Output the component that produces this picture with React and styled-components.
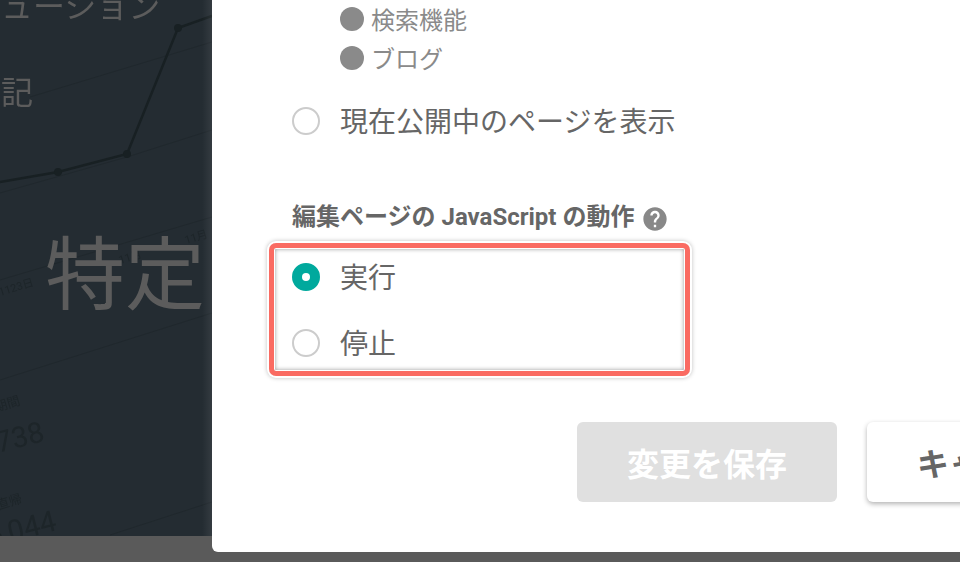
import React from "react"
import styled, { createGlobalStyle } from "styled-components"
import { MdHelp } from "react-icons/md"

const GlobalStyle = createGlobalStyle`
  html, body {
    margin: 0;
    padding: 0;
    background: #5a5a5a;
  }
  body {
    font-family: Roboto, "Noto Sans CJK JP", sans-serif;
    color: #666;
  }
`

const Page = styled.div`
  display: flex;
  width: 960px;
  height: 562px;
  overflow: hidden;
  background: #5a5a5a;
`

const Scene = styled.div`
  position: relative;
  flex: 0 0 212px;
  height: 536px;
  overflow: hidden;
  background: #242c32;

  &::after {
    content: "";
    position: absolute;
    top: 0;
    right: 0;
    bottom: 0;
    width: 10px;
    background: linear-gradient(to right, rgba(255, 255, 255, 0), rgba(255, 255, 255, 0.07));
  }
`

const Chart = styled.svg`
  position: absolute;
  top: 0;
  left: 0;
  filter: blur(0.5px);
`

const SceneText = styled.div`
  position: absolute;
  left: ${p => p.$left}px;
  top: ${p => p.$top}px;
  font-size: ${p => p.$size}px;
  line-height: 1;
  white-space: nowrap;
  color: #5c5c5c;
  filter: blur(0.4px);
`

const Modal = styled.div`
  flex: 0 0 748px;
  height: 552px;
  box-sizing: border-box;
  padding: 1px 0 0 80px;
  overflow: hidden;
  background: #fff;
  border-bottom-left-radius: 6px;
`

const SubList = styled.ul`
  display: flex;
  flex-direction: column;
  gap: 4px;
  margin: 0;
  padding: 0 0 0 48px;
  list-style: none;
`

const SubItem = styled.li`
  display: flex;
  align-items: center;
  gap: 7px;
  height: 35px;
  font-size: 24px;
  line-height: 1;
  color: #8a8a8a;
`

const SubLabel = styled.span`
  padding-top: 4px;
`

const Dot = styled.span`
  width: 24px;
  height: 24px;
  border-radius: 50%;
  background: #8a8a8a;
`

const RadioRow = styled.label`
  display: flex;
  align-items: center;
  gap: 20px;
  height: 28px;
  font-size: 28px;
  line-height: 1;
  color: #666;
`

const RadioLabel = styled.span`
  padding-top: 4px;
`

const RadioMark = styled.span`
  display: flex;
  align-items: center;
  justify-content: center;
  box-sizing: border-box;
  flex: 0 0 28px;
  width: 28px;
  height: 28px;
  border-radius: 50%;
  border: 2px solid ${p => (p.$checked ? "#00a99d" : "#cccccc")};
  background: ${p => (p.$checked ? "#00a99d" : "#fff")};

  &::after {
    content: "";
    display: ${p => (p.$checked ? "block" : "none")};
    width: 8px;
    height: 8px;
    border-radius: 50%;
    background: #fff;
  }
`

const CurrentPage = styled.div`
  margin-top: 32px;
`

const Heading = styled.div`
  display: flex;
  align-items: center;
  gap: 7px;
  margin-top: 67px;
  height: 30px;
  font-size: 24px;
  line-height: 1;
  font-weight: 700;
  white-space: pre;
  color: #666;
`

const HelpIcon = styled(MdHelp)`
  width: 28px;
  height: 28px;
  margin-top: 3px;
  color: #888;
`

const RadioGroup = styled.div`
  display: flex;
  flex-direction: column;
  gap: 38px;
  box-sizing: border-box;
  width: 421px;
  height: 133px;
  margin: 11px 0 0 -23px;
  padding: 15px 0 0 18px;
  border: 5px solid #fa6b62;
  border-radius: 7px;
  box-shadow:
    0 0 0 2px #fff,
    0 0 4px 2px rgba(0, 0, 0, 0.25),
    inset 0 0 0 1px #fff,
    inset 0 0 4px 1px rgba(0, 0, 0, 0.4);
`

const Actions = styled.div`
  display: flex;
  gap: 30px;
  margin: 46px 0 0 285px;
`

const Button = styled.button`
  flex: 0 0 260px;
  height: 80px;
  padding: 0;
  border: none;
  border-radius: 6px;
  font-family: inherit;
  font-size: 32px;
  font-weight: 700;
  color: ${p => (p.$disabled ? "#fff" : "#666")};
  background: ${p => (p.$disabled ? "#e0e0e0" : "#fff")};
  box-shadow: ${p => (p.$disabled ? "none" : "0 2px 5px rgba(0, 0, 0, 0.3)")};
`

const BackChart = () => (
  <Chart width="212" height="536" viewBox="0 0 212 536">
    <g fill="none" stroke="#20282d" strokeWidth="1">
      <path d="M30 97 L212 42" />
      <path d="M0 193 L127 157 L212 130" />
      <path d="M0 280 L212 217" />
      <path d="M0 380 L212 313" />
      <path d="M110 535 L212 502" />
    </g>
    <path d="M0 182 L58 172 L127 154 L178 28 L212 16" fill="none" stroke="#182023" strokeWidth="2.5" />
    <g fill="#182023">
      <circle cx="58" cy="172" r="4" />
      <circle cx="127" cy="154" r="4" />
      <circle cx="178" cy="28" r="4" />
    </g>
    <g fill="#1d2529" fontFamily="Roboto, 'Noto Sans CJK JP', sans-serif">
      <text x="186" y="244" fontSize="11" transform="rotate(-17 186 244)">11月</text>
      <text x="120" y="264" fontSize="11" transform="rotate(-17 120 264)">11月</text>
      <text x="0" y="296" fontSize="11" transform="rotate(-17 0 296)">1123日</text>
      <text x="-4" y="412" fontSize="13" transform="rotate(-17 -4 412)">期間</text>
      <text x="-23" y="458" fontSize="29" transform="rotate(-14 -23 458)">5,738</text>
      <text x="-2" y="510" fontSize="13" transform="rotate(-17 -2 510)">直帰</text>
      <text x="-11" y="547" fontSize="29" transform="rotate(-14 -11 547)">5,044</text>
    </g>
  </Chart>
)

export default () => (
  <>
    <GlobalStyle />
    <Page>
      <Scene>
        <BackChart />
        <SceneText $left={-63} $top={-9} $size={32}>ソリューション</SceneText>
        <SceneText $left={-31} $top={77} $size={32}>追記</SceneText>
        <SceneText $left={45} $top={236} $size={80}>特定テーマ</SceneText>
      </Scene>
      <Modal>
        <SubList>
          <SubItem>
            <Dot />
            <SubLabel>検索機能</SubLabel>
          </SubItem>
          <SubItem>
            <Dot />
            <SubLabel>ブログ</SubLabel>
          </SubItem>
        </SubList>
        <CurrentPage>
          <RadioRow>
            <RadioMark />
            <RadioLabel>現在公開中のページを表示</RadioLabel>
          </RadioRow>
        </CurrentPage>
        <Heading>
          編集ページの JavaScript の動作
          <HelpIcon />
        </Heading>
        <RadioGroup>
          <RadioRow>
            <RadioMark $checked />
            <RadioLabel>実行</RadioLabel>
          </RadioRow>
          <RadioRow>
            <RadioMark />
            <RadioLabel>停止</RadioLabel>
          </RadioRow>
        </RadioGroup>
        <Actions>
          <Button $disabled>変更を保存</Button>
          <Button>キャンセル</Button>
        </Actions>
      </Modal>
    </Page>
  </>
)
